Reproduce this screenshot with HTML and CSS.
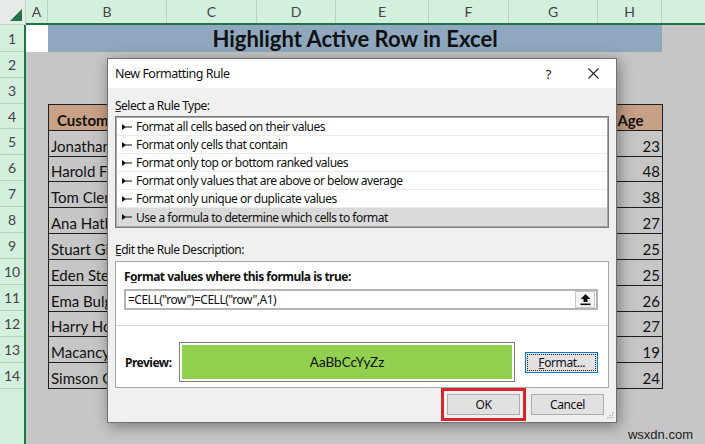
FILE: index.html
```html
<!DOCTYPE html>
<html>
<head>
    <meta charset="utf-8">
    <title>New Formatting Rule</title>
<link rel="stylesheet" href="styles.css">
</head>
<body>
    <div class="sheet">
        <div class="corner">
            <svg width="14" height="14" viewBox="0 0 14 14"><polygon points="13,1 13,13 1,13" fill="#217346"/></svg>
        </div>
        <div class="col-heads">
            <div>A</div><div>B</div><div>C</div><div>D</div><div>E</div><div>F</div><div>G</div><div>H</div><div class="last"></div>
        </div>
        <div class="row-heads">
            <div class="rh r-tall">1</div>
            <div class="rh">2</div>
            <div class="rh">3</div>
            <div class="rh r-short">4</div>
            <div class="rh">5</div>
            <div class="rh">6</div>
            <div class="rh">7</div>
            <div class="rh">8</div>
            <div class="rh">9</div>
            <div class="rh">10</div>
            <div class="rh">11</div>
            <div class="rh">12</div>
            <div class="rh">13</div>
            <div class="rh">14</div>
        </div>
        <div class="cells">
            <div class="a1"></div>
            <div class="title">Highlight Active Row in Excel</div>
            <!-- column B is mostly hidden by the dialog, only the visible part is kept -->
            <table class="tbl">
                <colgroup>
                    <col class="w-b"><col class="w-c"><col class="w-d"><col class="w-e"><col class="w-f"><col class="w-g"><col class="w-h">
                </colgroup>
                <tr class="head"><td class="cust">Custome</td><td></td><td></td><td></td><td></td><td></td><td>Age</td></tr>
                <tr><td>Jonathan</td><td></td><td></td><td></td><td></td><td></td><td class="num">23</td></tr>
                <tr><td>Harold Fi</td><td></td><td></td><td></td><td></td><td></td><td class="num">48</td></tr>
                <tr><td>Tom Clem</td><td></td><td></td><td></td><td></td><td></td><td class="num">38</td></tr>
                <tr><td>Ana Hath</td><td></td><td></td><td></td><td></td><td></td><td class="num">27</td></tr>
                <tr><td>Stuart Gil</td><td></td><td></td><td></td><td></td><td></td><td class="num">25</td></tr>
                <tr><td>Eden Stev</td><td></td><td></td><td></td><td></td><td></td><td class="num">25</td></tr>
                <tr><td>Ema Bulg</td><td></td><td></td><td></td><td></td><td></td><td class="num">26</td></tr>
                <tr><td>Harry Hof</td><td></td><td></td><td></td><td></td><td></td><td class="num">27</td></tr>
                <tr><td>Macancy</td><td></td><td></td><td></td><td></td><td></td><td class="num">19</td></tr>
                <tr><td>Simson G</td><td></td><td></td><td></td><td></td><td></td><td class="num">24</td></tr>
            </table>
        </div>
    </div>

    <div class="dialog">
        <div class="dlg-title">
            <span class="dlg-name">New Formatting Rule</span>
            <span class="dlg-help">?</span>
            <svg class="dlg-close" width="11" height="11" viewBox="0 0 11 11"><path d="M0.5 0.5 L10.5 10.5 M10.5 0.5 L0.5 10.5" stroke="#222" stroke-width="1.1"/></svg>
        </div>
        <div class="dlg-body">
            <div class="label">S&#818;elect a Rule Type:</div>
            <ul class="rule-list">
                <li><svg class="tri" width="10" height="6" viewBox="0 0 10 6"><polygon points="0,0 3.5,2.4 10,2.6 10,3.4 3.5,3.6 0,6" fill="#111"/></svg>Format all cells based on their values</li>
                <li><svg class="tri" width="10" height="6" viewBox="0 0 10 6"><polygon points="0,0 3.5,2.4 10,2.6 10,3.4 3.5,3.6 0,6" fill="#111"/></svg>Format only cells that contain</li>
                <li><svg class="tri" width="10" height="6" viewBox="0 0 10 6"><polygon points="0,0 3.5,2.4 10,2.6 10,3.4 3.5,3.6 0,6" fill="#111"/></svg>Format only top or bottom ranked values</li>
                <li><svg class="tri" width="10" height="6" viewBox="0 0 10 6"><polygon points="0,0 3.5,2.4 10,2.6 10,3.4 3.5,3.6 0,6" fill="#111"/></svg>Format only values that are above or below average</li>
                <li><svg class="tri" width="10" height="6" viewBox="0 0 10 6"><polygon points="0,0 3.5,2.4 10,2.6 10,3.4 3.5,3.6 0,6" fill="#111"/></svg>Format only unique or duplicate values</li>
                <li class="selected"><svg class="tri" width="10" height="6" viewBox="0 0 10 6"><polygon points="0,0 3.5,2.4 10,2.6 10,3.4 3.5,3.6 0,6" fill="#111"/></svg>Use a formula to determine which cells to format</li>
            </ul>
            <div class="label label-edit">E&#818;dit the Rule Description:</div>
            <div class="desc-box">
                <div class="desc-head">Fo&#818;rmat values where this formula is true:</div>
                <div class="formula">
                    <span>=CELL("row")=CELL("row",A1)</span>
                    <span class="ref-btn"><svg width="11" height="12" viewBox="0 0 11 12"><polygon points="5.5,0 10.5,5 7.5,5 7.5,8 3.5,8 3.5,5 0.5,5" fill="#111"/><rect x="0.5" y="9.5" width="10" height="1.6" fill="#111"/></svg></span>
                </div>
                <div class="sep"></div>
                <div class="preview-row">
                    <span class="preview-label">Preview:</span>
                    <div class="preview"><div class="preview-fill">AaBbCcYyZz</div></div>
                    <button class="btn btn-format"><span>F&#818;ormat...</span></button>
                </div>
            </div>
            <div class="dlg-buttons">
                <button class="btn btn-ok">OK</button>
                <button class="btn">Cancel</button>
                <svg class="grip" width="7" height="7" viewBox="0 0 7 7">
                    <rect x="5" y="0" width="1.4" height="1.4" fill="#b0b0b0"/>
                    <rect x="2.5" y="2.5" width="1.4" height="1.4" fill="#b0b0b0"/><rect x="5" y="2.5" width="1.4" height="1.4" fill="#b0b0b0"/>
                    <rect x="0" y="5" width="1.4" height="1.4" fill="#b0b0b0"/><rect x="2.5" y="5" width="1.4" height="1.4" fill="#b0b0b0"/><rect x="5" y="5" width="1.4" height="1.4" fill="#b0b0b0"/>
                </svg>
            </div>
        </div>
    </div>

    <div class="watermark">wsxdn.com</div>
</body>
</html>
```

FILE: styles.css
```css
body {
    margin: 0;
    width: 705px;
    height: 444px;
    overflow: hidden;
    position: relative;
    font-family: Lato, "Liberation Sans", sans-serif;
    color: #111;
}

/* worksheet */
.sheet {
    display: grid;
    grid-template-columns: 26px 1fr;
    grid-template-rows: 25px 1fr;
    height: 444px;
}

.corner {
    background: #e6ebe7;
    border-right: 1px solid #c3d3c8;
    border-bottom: 1px solid #c3d3c8;
    box-sizing: border-box;
    display: flex;
    align-items: flex-end;
    justify-content: flex-end;
    padding: 0 2px 2px 0;
}

.col-heads {
    display: grid;
    grid-template-columns: 22px 119px 90px 79px 93px 80px 89px 64px 1fr;
    background: #d3efdd;
    border-bottom: 2px solid #217346;
}

.col-heads div {
    border-right: 1px solid #b9d3c1;
    text-align: center;
    line-height: 23px;
    font-size: 14px;
    color: #444;
}

.col-heads .last {
    border-right: none;
}

.row-heads {
    display: flex;
    flex-direction: column;
    background: #d3efdd;
    border-right: 2px solid #217346;
}

.rh {
    height: 26px;
    flex: none;
    box-sizing: border-box;
    border-bottom: 1px solid #b9d3c1;
    display: flex;
    align-items: center;
    justify-content: center;
    font-size: 14px;
    color: #444;
}

.r-tall {
    height: 27px;
}

.r-short {
    height: 25px;
}

.cells {
    display: grid;
    grid-template-columns: 22px 119px 90px 79px 93px 80px 89px 64px 1fr;
    grid-template-rows: 27px 26px 26px 25px repeat(10, 26px) 1fr;
    background: #c6c6c6;
}

.a1 {
    grid-area: 1 / 1;
    background: #fff;
}

.title {
    grid-area: 1 / 2 / 2 / 9;
    background: #8fa8bf;
    font-weight: bold;
    font-size: 22px;
    line-height: 27px;
    text-align: center;
}

.tbl {
    grid-area: 4 / 2 / 15 / 9;
    border-collapse: collapse;
    table-layout: fixed;
    width: 614px;
    height: 285px;
}

.w-b { width: 119px; }
.w-c { width: 90px; }
.w-d { width: 79px; }
.w-e { width: 93px; }
.w-f { width: 80px; }
.w-g { width: 89px; }
.w-h { width: 64px; }

.tbl td {
    border: 1px solid #1e1e1e;
    padding: 0 2px 1px 2px;
    height: 25px;
    box-sizing: border-box;
    font-size: 15px;
    vertical-align: bottom;
    white-space: nowrap;
    overflow: hidden;
}

.tbl .head td {
    background: #c7a086;
    font-weight: bold;
    text-align: center;
    height: 25px;
}

.tbl .head .cust {
    text-align: left;
    padding-left: 8px;
}

.tbl .num {
    text-align: right;
}

/* dialog */
.dialog {
    position: absolute;
    left: 107px;
    top: 58px;
    width: 510px;
    height: 365px;
    box-sizing: border-box;
    border: 1px solid #707070;
    background: #f0f0f0;
    box-shadow: 2px 3px 14px rgba(0, 0, 0, 0.4);
    font-family: "Noto Sans", "Open Sans", sans-serif;
    font-size: 12px;
    letter-spacing: -0.5px;
    color: #111;
    display: flex;
    flex-direction: column;
}

.dlg-title {
    height: 29px;
    background: #fff;
    display: flex;
    align-items: center;
    padding: 0 17px 0 7px;
}

.dlg-name {
    flex: 1;
    font-size: 12.5px;
}

.dlg-help {
    font-size: 13px;
    margin-right: 37px;
}

.dlg-body {
    flex: 1;
    padding: 0 7px;
    display: flex;
    flex-direction: column;
}

.label {
    margin-top: 10px;
    line-height: 16px;
}

.label-edit {
    margin-top: 14px;
}

.rule-list {
    list-style: none;
    margin: 2px 0 0 0;
    padding: 0;
    border: 1px solid #7a7a7a;
    box-shadow: inset 0 0 0 1px #a8a8a8;
    background: #fff;
    padding: 1px;
}

.rule-list li {
    height: 18px;
    box-sizing: border-box;
    border-bottom: 1px solid #ececec;
    display: flex;
    align-items: center;
    padding-left: 5px;
}

.rule-list li:last-child {
    border-bottom: none;
}

.rule-list .selected {
    background: #dadada;
}

.tri {
    margin-right: 4px;
}

.desc-box {
    margin-top: 3px;
    height: 127px;
    box-sizing: border-box;
    background: #fff;
    border: 1px solid #a8a8a8;
    padding: 7px 10px 0 8px;
    display: flex;
    flex-direction: column;
}

.desc-head {
    font-weight: bold;
    line-height: 16px;
}

.formula {
    margin-top: 4px;
    height: 21px;
    box-sizing: border-box;
    border: 2px solid #b4b4b4;
    display: flex;
    align-items: center;
    justify-content: space-between;
    padding: 0 1px 0 2px;
}

.ref-btn {
    width: 20px;
    height: 17px;
    box-sizing: border-box;
    border: 1px solid #c8c8c8;
    background: #f4f4f4;
    display: flex;
    align-items: center;
    justify-content: center;
}

.sep {
    margin: 15px -10px 0 -8px;
    border-top: 1px solid #d4d4d4;
}

.preview-row {
    margin-top: 16px;
    display: flex;
    align-items: center;
}

.preview-label {
    font-weight: bold;
    width: 54px;
    margin-left: 1px;
}

.preview {
    width: 339px;
    height: 40px;
    box-sizing: border-box;
    border: 1px solid #7e7e7e;
    padding: 2px;
    background: #fff;
}

.preview-fill {
    height: 100%;
    background: #92d050;
    display: flex;
    align-items: center;
    justify-content: center;
    font-family: Lato, sans-serif;
    font-size: 13.5px;
    letter-spacing: 0;
}

.btn {
    font-family: "Noto Sans", "Open Sans", sans-serif;
    font-size: 12px;
    letter-spacing: -0.4px;
    color: #111;
    background: #e1e1e1;
    border: 1px solid #adadad;
    height: 21px;
    padding: 0;
}

.btn-format {
    margin-left: 10px;
    width: 73px;
    border-color: #0078d7;
    padding: 1px;
}

.btn-format span {
    display: block;
    height: 100%;
    box-sizing: border-box;
    border: 1px dotted #222;
    line-height: 15px;
}

.dlg-buttons {
    margin-top: 6px;
    display: flex;
    justify-content: flex-end;
    align-items: flex-start;
    padding-right: 5px;
    position: relative;
}

.dlg-buttons .btn {
    width: 73px;
    margin-left: 11px;
}

.btn-ok {
    outline: 3px solid #d9232d;
    outline-offset: 3px;
}

.grip {
    position: absolute;
    right: -5px;
    top: 18px;
}

.watermark {
    position: absolute;
    right: 12px;
    bottom: 2px;
    font-family: "Liberation Sans", sans-serif;
    font-size: 13px;
    color: #222;
}
```
